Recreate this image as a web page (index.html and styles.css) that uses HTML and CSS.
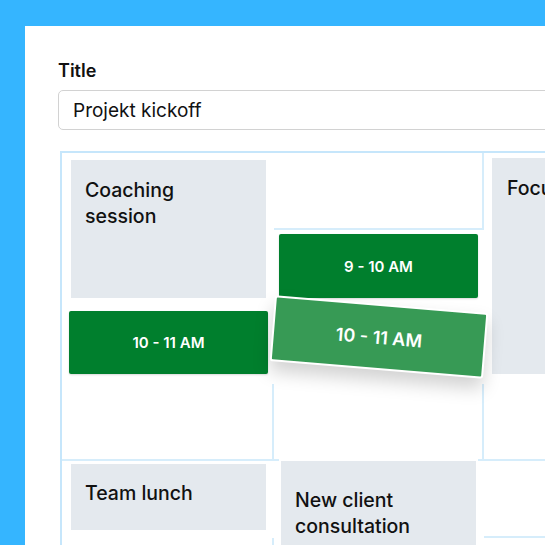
FILE: index.html
```html
<!DOCTYPE html>
<html lang="en">
<head>
    <meta charset="UTF-8">
    <meta name="viewport" content="width=device-width, initial-scale=1.0">
    <title>Schedule</title>
    <link rel="stylesheet" href="styles.css">
</head>
<body>
    <div class="sheet">
        <label class="field-label" for="title">Title</label>
        <input class="field-input" type="text" id="title" value="Projekt kickoff">

        <div class="calendar">
            <!-- background cells -->
            <div class="cell"></div><div class="cell"></div><div class="cell"></div>
            <div class="cell"></div><div class="cell"></div><div class="cell"></div>
            <div class="cell"></div><div class="cell"></div><div class="cell"></div>
            <div class="cell"></div><div class="cell"></div><div class="cell"></div>
            <div class="cell"></div><div class="cell"></div><div class="cell"></div>
            <div class="cell"></div><div class="cell"></div><div class="cell"></div>

            <!-- events -->
            <div class="event event-coaching">Coaching session</div>
            <div class="event event-focus">Focus time</div>
            <div class="slot slot-nine">9 - 10 AM</div>
            <div class="slot slot-ten">10 - 11 AM</div>
            <div class="slot slot-drag">10 - 11 AM</div>
            <div class="event event-lunch">Team lunch</div>
            <div class="event event-client">New client consultation</div>
        </div>
    </div>
</body>
</html>
```

FILE: styles.css
```css
body {
    margin: 0;
    background-color: #35b5ff;
    font-family: Inter, "Noto Sans", Arial, sans-serif;
    color: #111;
    height: 545px;
    overflow: hidden;
}

.sheet {
    margin: 26px 0 0 25px;
    padding: 34px 0 0 33px;
    background-color: #fff;
    height: 700px;
}

.field-label {
    display: block;
    font-size: 18px;
    font-weight: 600;
    line-height: 22px;
    margin-bottom: 8px;
}

.field-input {
    display: block;
    box-sizing: border-box;
    width: 520px;
    height: 40px;
    padding: 0 14px;
    border: 1px solid #d2d2d2;
    border-radius: 5px;
    font-family: inherit;
    font-size: 19px;
    color: #111;
    outline: none;
}

.calendar {
    display: grid;
    grid-template-columns: 212px 210px 210px;
    grid-template-rows: repeat(6, 77px);
    margin: 21px 0 0 2px;
    border-top: 2px solid #c6e6fb;
    border-left: 2px solid #c6e6fb;
}

.cell {
    border-right: 2px solid #d6edfb;
    border-bottom: 2px solid #d6edfb;
}

/* grey events */
.event {
    background-color: #e4e9ee;
    font-size: 19.5px;
    font-weight: 500;
    line-height: 26px;
    padding: 17px 30px 14px 14px;
    box-shadow: 0 0 0 2px #fff;
    z-index: 1;
}

.event-coaching {
    grid-column: 1;
    grid-row: 1 / 3;
    margin: 7px 8px 9px 9px;
}

.event-focus {
    grid-column: 3;
    grid-row: 1 / 4;
    margin: 5px 0 10px 8px;
    padding-left: 15px;
    white-space: nowrap;
}

.event-lunch {
    grid-column: 1;
    grid-row: 5;
    margin: 3px 8px 8px 9px;
    padding-top: 16px;
}

.event-client {
    grid-column: 2;
    grid-row: 5 / 7;
    margin: 0 8px 20px 7px;
    padding-top: 26px;
}

/* green time slots */
.slot {
    display: flex;
    align-items: center;
    justify-content: center;
    background-color: #007f2d;
    color: #fff;
    font-size: 15px;
    font-weight: 600;
    border-radius: 2px;
    box-shadow: 0 1px 2px rgba(0, 0, 0, 0.15);
    z-index: 2;
}

.slot-nine {
    grid-column: 2;
    grid-row: 2;
    margin: 4px 6px 9px 5px;
}

.slot-ten {
    grid-column: 1;
    grid-row: 3;
    margin: 4px 6px 10px 7px;
}

.slot-drag {
    grid-column: 2;
    grid-row: 3;
    margin: 4px -2px 7px -2px;
    background-color: #379a55;
    border: 2px solid #fff;
    border-radius: 3px;
    font-size: 18px;
    box-shadow: 0 10px 18px rgba(0, 0, 0, 0.18);
    transform: translateY(-7px) rotate(4.7deg);
    z-index: 3;
}
```
